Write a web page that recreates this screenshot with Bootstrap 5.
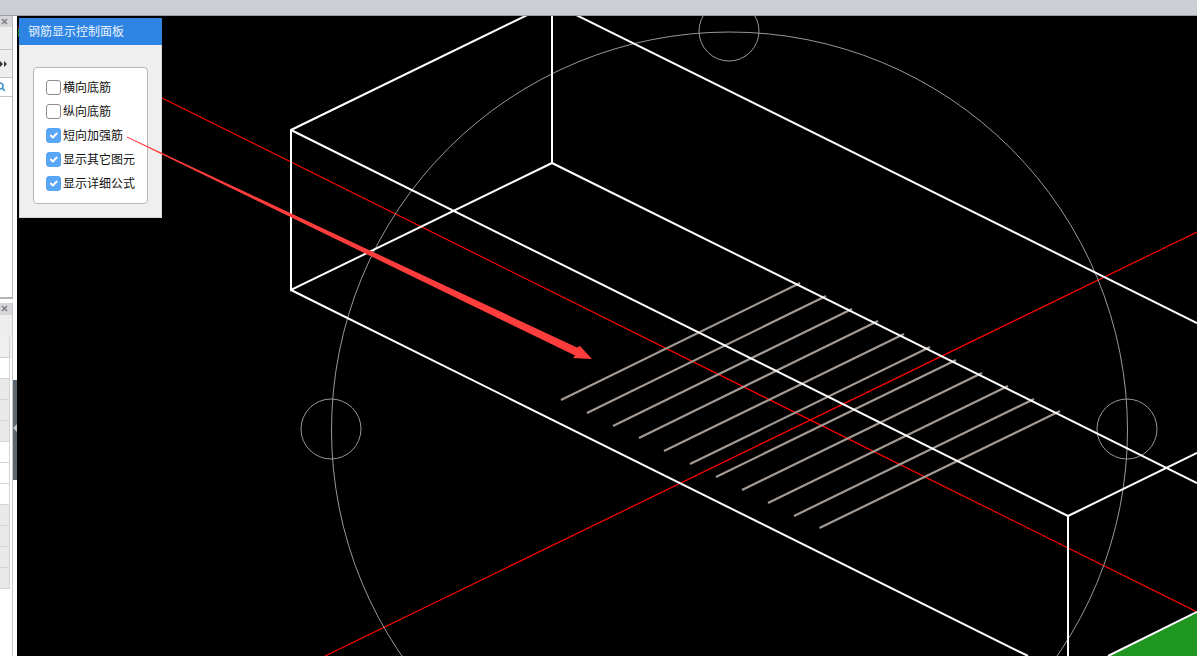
<!DOCTYPE html>
<html lang="zh-Hans">

<head>
  <meta charset="UTF-8">
  <meta name="viewport" content="width=device-width, initial-scale=1.0">
  <title>钢筋显示控制面板</title>
  <link href="https://cdn.jsdelivr.net/npm/bootstrap@5.3.2/dist/css/bootstrap.min.css" rel="stylesheet">
  <style>
    html, body { height: 656px; overflow: hidden; background: #000; }
    body { font-family: "Liberation Sans", "Noto Sans CJK SC", sans-serif; font-size: 12px; line-height: 1; }

    .top-strip { height: 16px; background: #cbced3; border-bottom: 1px solid #9c9ea2; }
    .work-area { height: 640px; }

    /* left rail */
    .side-rail { width: 17px; background: #fff; }
    .side-pane { width: 13px; border-right: 1px solid #b4b4b4; background: #fff; }
    .pane-top { height: 283px; border-bottom: 2px solid #b4b4b4; }
    .pane-gap { height: 4px; width: 13px; }
    .pane-low { height: 353px; border-right-color: #c8c8c8; }
    .pane-head { height: 11px; background: #d4d6da; }
    .pane-head-low { height: 12px; }
    .pane-head svg { display: block; margin-left: 1px; }
    .tool-a { height: 23px; background: #eee; border-bottom: 1px solid #c4c4c4; }
    .tool-b { height: 28px; background: #eee; border-bottom: 1px solid #c4c4c4; }
    .tool-c { height: 19px; border-bottom: 1px solid #c4c4c4; }
    .tool-d { height: 22px; background: #eee; }
    .tool-b svg, .tool-c svg { display: block; }
    .grid-row { height: 21px; width: 10px; border-right: 1px solid #d4d4d4; border-bottom: 1px solid #d4d4d4; }
    .grid-grey { background: #e9e9e9; }
    .grid-head { background: #f0f0f0; border-bottom-color: #cfcfcf; box-shadow: 2px 0 0 #f3f3f3; }
    .pane-handle { left: 13px; top: 364px; width: 4px; height: 100px; background: #5b6670; }
    .pane-handle svg { display: block; margin-top: 44px; }

    /* drawing */
    .draw-canvas { background: #000; min-width: 0; }
    .draw-canvas svg { display: block; }
    .arrow-layer { left: 0; top: 0; pointer-events: none; }
    .ln-white { stroke: #fff; stroke-width: 2; fill: none; }
    .ln-red { stroke: #f00; stroke-width: 1.2; fill: none; }
    .ln-circle { stroke: #989898; stroke-width: 1; fill: none; }
    .ln-bar { stroke: #a39a94; stroke-width: 2.2; fill: none; }

    /* control panel */
    .rebar-panel { left: 2px; top: 2px; width: 143px; height: 200px; background: #efefef; border: 1px solid #d8d8d8; border-top: 0; }
    .rebar-title { height: 27px; margin: 0 -1px; padding-left: 9px; background: #2e84e2; color: #e8f2fd; font-size: 12px; }
    .rebar-box { margin: 22px 0 0 13px; width: 115px; height: 137px; padding: 12px 0 0 12px; background: #fff; border: 1px solid #b8b8b8; border-radius: 4px; }
    .rebar-item { height: 24px; margin: 0; padding: 0; min-height: 0; color: #111; font-size: 12px; }
    .rebar-item .form-check-label { margin-top: 2px; }
    .rebar-item .form-check-input { float: none; width: 15px; height: 15px; margin: 0 2px 0 0; flex: none; border: 1px solid #8c8c8c; border-radius: 3px; }
    .rebar-item .form-check-input:checked { background-color: #5aa6f6; border-color: #5aa6f6; }
  </style>
</head>

<body>
  <div class="top-strip"></div>

  <div class="work-area d-flex position-relative">
    <!-- left rail, cut off by the panel -->
    <div class="side-rail flex-shrink-0">
      <div class="side-pane pane-top">
        <div class="pane-head"><svg width="7" height="11" viewBox="0 0 7 11"><path d="M1 3l5 5M6 3l-5 5" stroke="#808080" stroke-width="1.6"/></svg></div>
        <div class="tool-a"></div>
        <div class="tool-b d-flex align-items-center"><svg width="8" height="8" viewBox="0 0 8 8"><path d="M0 1l3 3-3 3zM4 1l3 3-3 3z" fill="#333"/></svg></div>
        <div class="tool-c d-flex align-items-center"><svg width="5" height="11" viewBox="0 0 5 11"><circle cx="0" cy="4" r="3" fill="none" stroke="#3d93c8" stroke-width="1.5"/><path d="M2 6l3 3" stroke="#3d93c8" stroke-width="1.6"/></svg></div>
      </div>
      <div class="pane-gap"></div>
      <div class="side-pane pane-low">
        <div class="pane-head pane-head-low"><svg width="7" height="12" viewBox="0 0 7 12"><path d="M1 3l5 5M6 3l-5 5" stroke="#808080" stroke-width="1.6"/></svg></div>
        <div class="tool-d"></div>
        <div class="grid-row grid-head"></div>
        <div class="grid-row"></div>
        <div class="grid-row grid-grey"></div>
        <div class="grid-row grid-grey"></div>
        <div class="grid-row grid-grey"></div>
        <div class="grid-row"></div>
        <div class="grid-row"></div>
        <div class="grid-row"></div>
        <div class="grid-row grid-grey"></div>
        <div class="grid-row grid-grey"></div>
        <div class="grid-row grid-grey"></div>
        <div class="grid-row grid-grey"></div>
      </div>
    </div>
    <div class="pane-handle position-absolute"><svg width="4" height="8" viewBox="0 0 4 8"><path d="M0 4l4-4v8z" fill="#c4c8cc"/></svg></div>

    <div class="draw-canvas flex-grow-1 position-relative">
      <svg width="1180" height="640" viewBox="17 16 1180 640">
        <!-- axis lines -->
        <line class="ln-red" x1="18" y1="26.5" x2="1197" y2="612"/>
        <line class="ln-red" x1="325" y1="656" x2="1197" y2="232"/>

        <!-- circles -->
        <circle class="ln-circle" cx="729.5" cy="430" r="398"/>
        <circle class="ln-circle" cx="729" cy="31" r="30"/>
        <circle class="ln-circle" cx="331" cy="429" r="30"/>
        <circle class="ln-circle" cx="1127" cy="429" r="30"/>

        <!-- rebars -->
        <line class="ln-bar" x1="561" y1="400" x2="800" y2="283"/>
        <line class="ln-bar" x1="587" y1="413" x2="826" y2="296"/>
        <line class="ln-bar" x1="613" y1="426" x2="852" y2="309"/>
        <line class="ln-bar" x1="639" y1="438" x2="878" y2="321"/>
        <line class="ln-bar" x1="664" y1="451" x2="904" y2="334"/>
        <line class="ln-bar" x1="690" y1="464" x2="930" y2="347"/>
        <line class="ln-bar" x1="716" y1="477" x2="956" y2="360"/>
        <line class="ln-bar" x1="742" y1="490" x2="982" y2="373"/>
        <line class="ln-bar" x1="768" y1="503" x2="1008" y2="386"/>
        <line class="ln-bar" x1="794" y1="516" x2="1034" y2="399"/>
        <line class="ln-bar" x1="819.5" y1="528" x2="1060" y2="411"/>

        <!-- slab -->
        <polygon points="1109,656 1197,613 1197,656" fill="#1f961f"/>
        <line class="ln-white" x1="1108" y1="656" x2="1197" y2="612"/>
        <path class="ln-white" d="M552 3L291 130V290L552 163V3"/>
        <line class="ln-white" x1="291" y1="130" x2="1068" y2="516"/>
        <line class="ln-white" x1="291" y1="290" x2="1028" y2="656"/>
        <line class="ln-white" x1="552" y1="163" x2="1197" y2="483"/>
        <line class="ln-white" x1="552" y1="3" x2="1197" y2="323"/>
        <line class="ln-white" x1="1068" y1="516" x2="1197" y2="453"/>
        <line class="ln-white" x1="1068" y1="516" x2="1068" y2="656"/>
        <path d="M19 28q-2 4 0 9" fill="none" stroke="#1f961f"/>
      </svg>

      <div class="rebar-panel position-absolute">
        <div class="rebar-title d-flex align-items-center">钢筋显示控制面板</div>
        <div class="rebar-box">
          <div class="form-check rebar-item d-flex align-items-start"><input class="form-check-input" type="checkbox" id="bar1"><label class="form-check-label" for="bar1">横向底筋</label></div>
          <div class="form-check rebar-item d-flex align-items-start"><input class="form-check-input" type="checkbox" id="bar2"><label class="form-check-label" for="bar2">纵向底筋</label></div>
          <div class="form-check rebar-item d-flex align-items-start"><input class="form-check-input" type="checkbox" id="bar3" checked><label class="form-check-label" for="bar3">短向加强筋</label></div>
          <div class="form-check rebar-item d-flex align-items-start"><input class="form-check-input" type="checkbox" id="bar4" checked><label class="form-check-label" for="bar4">显示其它图元</label></div>
          <div class="form-check rebar-item d-flex align-items-start"><input class="form-check-input" type="checkbox" id="bar5" checked><label class="form-check-label" for="bar5">显示详细公式</label></div>
        </div>
      </div>

      <!-- callout arrow runs over the panel -->
      <svg class="arrow-layer position-absolute" width="1180" height="640" viewBox="17 16 1180 640">
        <polygon points="127,136.6 577,347.5 580,346 592,359 573,358 575,355.5 127,137.6" fill="#ff3d3d"/>
      </svg>
    </div>
  </div>

  <script src="https://cdn.jsdelivr.net/npm/bootstrap@5.3.2/dist/js/bootstrap.bundle.min.js"></script>
</body>

</html>
